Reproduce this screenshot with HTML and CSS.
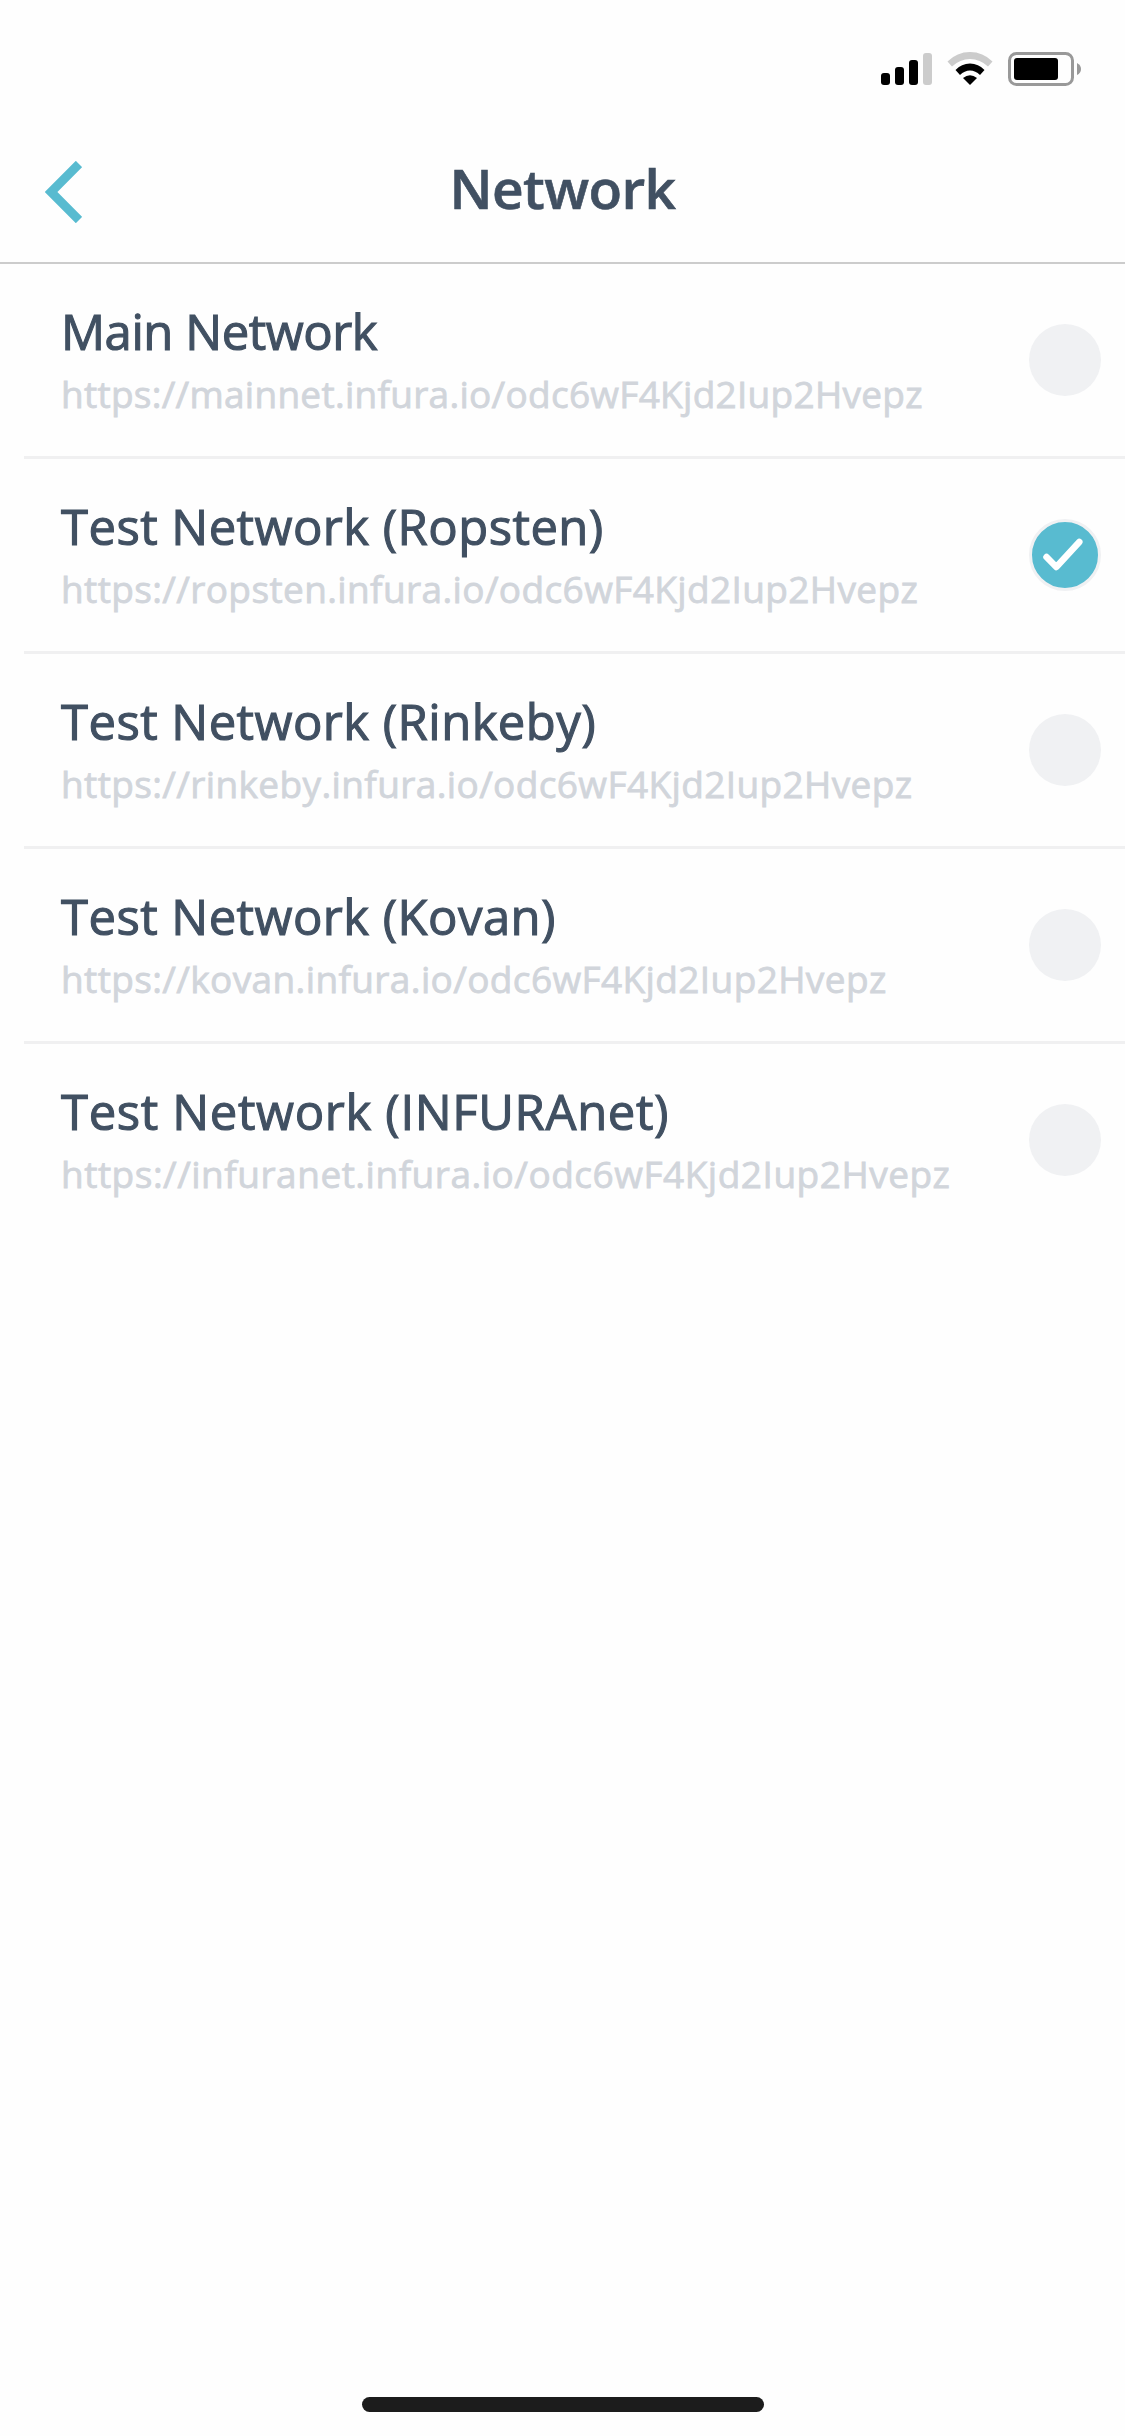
FILE: index.html
```
<!DOCTYPE html>
<html lang="en">
<head>
    <meta charset="UTF-8">
    <meta name="viewport" content="width=device-width, initial-scale=1.0">
    <title>Network</title>
    <link rel="stylesheet" href="styles.css">
</head>
<body>
    <div class="screen">
        <div class="status-bar">
            <svg class="signal" width="51" height="32" viewBox="0 0 51 32">
                <rect x="0" y="20" width="9" height="12" rx="3"/>
                <rect x="14" y="14" width="9" height="18" rx="3"/>
                <rect x="28" y="7" width="9" height="25" rx="3"/>
                <rect class="dim" x="42" y="0" width="9" height="32" rx="3"/>
            </svg>
            <svg class="wifi" width="46" height="33" viewBox="0 0 46 33">
                <path class="dim" d="M0.5 9.5 Q10 0 23 0 T45.5 9.5 L41 14.5 Q33 7 23 7 T5 14.5 Z"/>
                <path d="M8.5 18 Q14.5 11.5 23 11.5 T37.5 18 L33 23 Q28.5 18.5 23 18.5 T13 23 Z"/>
                <path d="M16 26 Q23 20.5 30 26 L23 33 Z"/>
            </svg>
            <svg class="battery" width="73" height="34" viewBox="0 0 73 34">
                <rect class="case" x="1.5" y="1.5" width="63" height="31" rx="7"/>
                <rect x="6" y="6" width="44" height="22" rx="3"/>
                <path class="tip" d="M69 11 Q73 13 73 17 T69 23 Z"/>
            </svg>
        </div>
        <header>
            <svg class="back" width="37" height="62" viewBox="0 0 37 62">
                <path d="M34 3 L6 31 L34 59"/>
            </svg>
            <h1>Network</h1>
        </header>
        <ul class="networks">
            <li class="network main">
                <div class="info">
                    <h2>Main Network</h2>
                    <p>https://mainnet.infura.io/odc6wF4Kjd2Iup2Hvepz</p>
                </div>
                <span class="radio"></span>
            </li>
            <li class="network">
                <div class="info">
                    <h2>Test Network (Ropsten)</h2>
                    <p>https://ropsten.infura.io/odc6wF4Kjd2Iup2Hvepz</p>
                </div>
                <span class="radio selected">
                    <svg width="40" height="32" viewBox="0 0 40 32">
                        <path d="M1.5 18 L11.3 28 L34.3 3"/>
                    </svg>
                </span>
            </li>
            <li class="network">
                <div class="info">
                    <h2>Test Network (Rinkeby)</h2>
                    <p>https://rinkeby.infura.io/odc6wF4Kjd2Iup2Hvepz</p>
                </div>
                <span class="radio"></span>
            </li>
            <li class="network">
                <div class="info">
                    <h2>Test Network (Kovan)</h2>
                    <p>https://kovan.infura.io/odc6wF4Kjd2Iup2Hvepz</p>
                </div>
                <span class="radio"></span>
            </li>
            <li class="network infuranet">
                <div class="info">
                    <h2>Test Network (INFURAnet)</h2>
                    <p>https://infuranet.infura.io/odc6wF4Kjd2Iup2Hvepz</p>
                </div>
                <span class="radio"></span>
            </li>
        </ul>
        <div class="home-indicator"></div>
    </div>
</body>
</html>
```
FILE: styles.css
```
* {
    margin: 0;
    padding: 0;
    box-sizing: border-box;
}

body {
    font-family: 'Open Sans', 'Noto Sans', sans-serif;
    background: #fefefe;
    color: #415062;
}

.screen {
    display: flex;
    flex-direction: column;
    height: 2436px;
    overflow: hidden;
}

.status-bar {
    display: flex;
    justify-content: flex-end;
    align-items: flex-start;
    height: 132px;
    padding: 52px 44px 0 0;
}

.signal {
    margin: 1px 15px 0 0;
}

.wifi {
    margin-right: 15px;
}

.dim {
    fill: #ccc;
}

.case {
    fill: none;
    stroke: #999;
    stroke-width: 3;
}

.tip {
    fill: #999;
}

header {
    display: flex;
    align-items: center;
    height: 132px;
    padding: 0 45px 10px;
    border-bottom: 2px solid #ccc;
}

.back {
    fill: none;
    stroke: #58bbd0;
    stroke-width: 9;
}

header h1 {
    flex: 1;
    margin: -9px 37px 0 0;
    font-size: 55px;
    font-weight: 600;
    line-height: 76px;
    letter-spacing: -0.6px;
    text-align: center;
    -webkit-text-stroke: 0.6px;
}

.networks {
    flex: 1;
    list-style: none;
}

.network {
    display: flex;
    align-items: center;
    justify-content: space-between;
    height: 195px;
    margin-left: 24px;
    padding: 0 24px 0 37px;
    border-bottom: 3px solid #f0f0f1;
}

.network:last-child {
    border-bottom-color: transparent;
}

.info {
    white-space: nowrap;
}

.info h2 {
    font-size: 49px;
    font-weight: 400;
    line-height: 68px;
    letter-spacing: 0.45px;
    -webkit-text-stroke: 1.1px;
}

.info p {
    color: #d1d5db;
    font-size: 37px;
    line-height: 58px;
    letter-spacing: 0.38px;
    -webkit-text-stroke: 0.8px;
}

.main h2 {
    letter-spacing: -0.45px;
}

.main p {
    letter-spacing: 0.28px;
}

.infuranet h2 {
    letter-spacing: 0.65px;
}

.infuranet p {
    letter-spacing: 0.51px;
}

.radio {
    display: flex;
    justify-content: center;
    align-items: center;
    width: 72px;
    height: 72px;
    border-radius: 50%;
    background: #f0f1f3;
}

.radio.selected {
    border: 3px solid #f0f1f3;
    background: #58bbd0;
}

.radio svg {
    overflow: visible;
}

.radio path {
    fill: none;
    stroke: #fff;
    stroke-width: 6.5;
    stroke-linecap: round;
    stroke-linejoin: round;
}

.home-indicator {
    width: 402px;
    height: 15px;
    margin: 0 auto 24px;
    border-radius: 8px;
    background: #1c1c1c;
}
```
